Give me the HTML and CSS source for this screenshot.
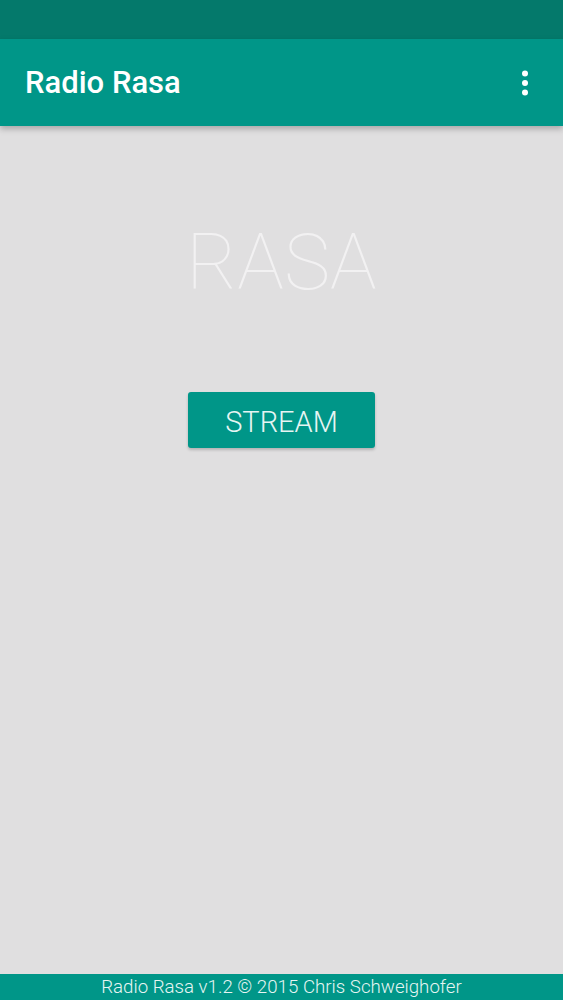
FILE: index.html
```html
<!DOCTYPE html>
<html>
<head>
<meta charset="utf-8">
<link rel="stylesheet" href="styles.css">
</head>
<body>
<div class="screen">
  <div class="statusbar"></div>
  <header class="appbar">
    <span class="title">Radio Rasa</span>
    <svg class="menu" width="8" height="26" viewBox="0 0 8 26"><circle cx="4" cy="3.5" r="3" fill="#fff"/><circle cx="4" cy="13" r="3" fill="#fff"/><circle cx="4" cy="22.5" r="3" fill="#fff"/></svg>
  </header>
  <main class="content">
    <div class="logo">RASA</div>
    <button class="stream">STREAM</button>
  </main>
  <footer class="footer">Radio Rasa v1.2 © 2015 Chris Schweighofer</footer>
</div>
</body>
</html>
```
FILE: styles.css
```css
html, body { margin: 0; padding: 0; }
body { font-family: Roboto, "Noto Sans", sans-serif; background: #e0dfe0; }
.screen { width: 563px; height: 1000px; display: flex; flex-direction: column; overflow: hidden; }
.statusbar { height: 39px; background: #04796b; flex: none; }
.appbar {
  height: 87px; flex: none; background: #009688;
  display: flex; align-items: center; justify-content: space-between;
  padding: 0 34px 0 25px;
  box-shadow: 0 3px 6px rgba(0,0,0,0.25);
  position: relative; z-index: 1;
}
.title { color: #fff; font-weight: 500; font-size: 31px; }
.menu { display: block; }
.content { flex: 1; display: flex; flex-direction: column; align-items: center; }
.logo {
  margin-top: 89px; font-weight: 100; font-size: 78px; line-height: 96px;
  color: #f2f1f2; letter-spacing: 0;
}
.stream {
  margin-top: 81px; width: 187px; height: 56px; border: 0; border-radius: 3px;
  padding: 3px 0 0;
  background: #009688; color: #e6f5f3; font-family: Roboto, sans-serif;
  font-weight: 300; font-size: 29px; box-shadow: 0 2px 3px rgba(0,0,0,0.2);
}
.footer {
  height: 26px; flex: none; background: #009688; color: #e6f5f3;
  text-align: center; font-weight: 300; font-size: 18.7px; line-height: 26px;
}
```
